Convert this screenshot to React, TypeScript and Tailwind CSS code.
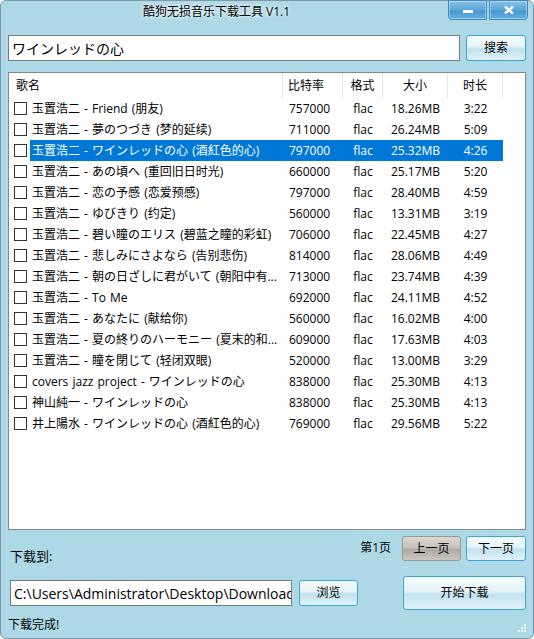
import React from "react";

type Song = {
  name: string;
  bitrate: string;
  size: string;
  duration: string;
};

const songs: Song[] = [
  { name: "玉置浩二 - Friend (朋友)", bitrate: "757000", size: "18.26MB", duration: "3:22" },
  { name: "玉置浩二 - 夢のつづき (梦的延续)", bitrate: "711000", size: "26.24MB", duration: "5:09" },
  { name: "玉置浩二 - ワインレッドの心 (酒紅色的心)", bitrate: "797000", size: "25.32MB", duration: "4:26" },
  { name: "玉置浩二 - あの頃へ (重回旧日时光)", bitrate: "660000", size: "25.17MB", duration: "5:20" },
  { name: "玉置浩二 - 恋の予感 (恋爱预感)", bitrate: "797000", size: "28.40MB", duration: "4:59" },
  { name: "玉置浩二 - ゆびきり (约定)", bitrate: "560000", size: "13.31MB", duration: "3:19" },
  { name: "玉置浩二 - 碧い瞳のエリス (碧蓝之瞳的彩虹)", bitrate: "706000", size: "22.45MB", duration: "4:27" },
  { name: "玉置浩二 - 悲しみにさよなら (告别悲伤)", bitrate: "814000", size: "28.06MB", duration: "4:49" },
  { name: "玉置浩二 - 朝の日ざしに君がいて (朝阳中有...", bitrate: "713000", size: "23.74MB", duration: "4:39" },
  { name: "玉置浩二 - To Me", bitrate: "692000", size: "24.11MB", duration: "4:52" },
  { name: "玉置浩二 - あなたに (献给你)", bitrate: "560000", size: "16.02MB", duration: "4:00" },
  { name: "玉置浩二 - 夏の終りのハーモニー (夏末的和...", bitrate: "609000", size: "17.63MB", duration: "4:03" },
  { name: "玉置浩二 - 瞳を閉じて (轻闭双眼)", bitrate: "520000", size: "13.00MB", duration: "3:29" },
  { name: "covers jazz project - ワインレッドの心", bitrate: "838000", size: "25.30MB", duration: "4:13" },
  { name: "神山純一 - ワインレッドの心", bitrate: "838000", size: "25.30MB", duration: "4:13" },
  { name: "井上陽水 - ワインレッドの心 (酒紅色的心)", bitrate: "769000", size: "29.56MB", duration: "5:22" },
];

const blueBtn =
  "flex items-center justify-center rounded-[3px] border border-[#3aa6d6] bg-[linear-gradient(to_bottom,#f6fbfd_0%,#e6f4f9_42%,#c2e2ee_55%,#e2f2f8_100%)] text-[12px] text-black";

const titleBtn =
  "w-[39px] h-[20px] flex items-center justify-center border border-[#4289bb] bg-[linear-gradient(to_bottom,#86c3e9,#5aa7d8_50%,#4597cf_55%,#66b0de)] shadow-[inset_0_0_0_1px_rgba(255,255,255,0.35)]";

const App: React.FC = () => {
  const selected = 2;

  return (
    <div className="w-[534px] h-[639px] bg-white font-['Open_Sans','Noto_Sans_CJK_SC',sans-serif]">
      <div className="w-full h-full flex flex-col rounded-[6px] border border-[#7d98aa] bg-[#add8e6] px-[7px]">
        {/* title bar */}
        <div className="flex h-[19px] -mx-[7px]">
          <div className="flex-1 pr-[16px] pt-[3px] text-center text-[12px] leading-[16px] text-black [text-shadow:0_0_6px_#ffffff,0_0_3px_#ffffff]">
            酷狗无损音乐下载工具 V1.1
          </div>
          <div className="flex gap-[2px] mr-[5px] -mt-px">
            <div className={titleBtn + " rounded-bl-[4px]"}>
              <div className="w-[10px] h-[3px] bg-white mt-[3px]" />
            </div>
            <div className={titleBtn + " rounded-br-[4px]"}>
              <svg width="10" height="8" viewBox="0 0 10 8">
                <path d="M1 0.5 L9 7.5 M9 0.5 L1 7.5" stroke="white" strokeWidth="2.4" />
              </svg>
            </div>
          </div>
        </div>

        {/* search row */}
        <div className="flex mt-[15px] gap-[6px]">
          <div className="w-[452px] h-[26px] flex items-center border border-[#7a7a7a] bg-white pl-[3px] text-[14px] text-black">
            ワインレッドの心
          </div>
          <button className={blueBtn + " w-[60px] h-[26px]"}>搜索</button>
        </div>

        {/* song table */}
        <div className="mt-[11px] h-[458px] border border-[#828790] bg-white text-[12px] text-black">
          <div className="flex h-[25px]">
            <div className="w-[274px] flex items-center pl-[7px] border-r border-[#e5e5e5]">歌名</div>
            <div className="w-[60px] flex items-center pl-[5px] border-r border-[#e5e5e5]">比特率</div>
            <div className="w-[40px] flex items-center justify-center border-r border-[#e5e5e5]">格式</div>
            <div className="w-[65px] flex items-center justify-center border-r border-[#e5e5e5]">大小</div>
            <div className="w-[55px] flex items-center justify-center border-r border-[#e5e5e5]">时长</div>
          </div>
          {songs.map((song, idx) => (
            <div key={`song-${idx}`} className="flex h-[21px]">
              <div className="w-[21px] flex items-center pl-[5px]">
                <div className="w-[13px] h-[13px] border border-[#333333] bg-white" />
              </div>
              <div
                className={
                  idx === selected
                    ? "w-[473px] flex items-center bg-[#0078d7] text-white"
                    : "w-[473px] flex items-center"
                }
              >
                <div className="w-[253px] pl-[2px] whitespace-nowrap overflow-hidden [word-spacing:1px]">
                  {song.name}
                </div>
                <div className="w-[60px] pl-[6px]">{song.bitrate}</div>
                <div className="w-[40px] text-center">flac</div>
                <div className="w-[65px] text-center">{song.size}</div>
                <div className="w-[55px] text-center">{song.duration}</div>
              </div>
            </div>
          ))}
        </div>

        {/* pager row */}
        <div className="flex mt-[6px] h-[25px]">
          <div className="ml-[2px] mt-[12px] text-[13px] leading-[16px] text-black">下载到:</div>
          <div className="ml-auto flex items-center">
            <span className="text-[12px] text-black mr-[11px] -mt-[2px]">第1页</span>
            <button className="w-[59px] h-[25px] flex items-center justify-center rounded-[3px] border border-[#9c978f] bg-[linear-gradient(to_bottom,#dcd8d0_0%,#c6c2ba_45%,#aeaaa2_55%,#cbc7bf_100%)] text-[12px] text-black">
              上一页
            </button>
            <button className={blueBtn + " w-[60px] h-[25px] ml-[5px]"}>下一页</button>
          </div>
        </div>

        {/* download row */}
        <div className="flex items-center mt-[15px] h-[34px]">
          <div className="ml-[2px] w-[282px] h-[26px] flex items-center border border-[#7a7a7a] bg-white pl-[3px] text-[14px] text-black whitespace-nowrap overflow-hidden">
            C:\Users\Administrator\Desktop\Downloads
          </div>
          <button className={blueBtn + " w-[59px] h-[26px] ml-[7px]"}>浏览</button>
          <button className={blueBtn + " w-[123px] h-[34px] ml-auto"}>开始下载</button>
        </div>

        {/* status row */}
        <div className="flex items-end mt-[7px]">
          <span className="text-[12px] leading-[16px] text-black">下载完成!</span>
          <svg className="ml-auto mb-[1px]" width="9" height="9" viewBox="0 0 9 9">
            <rect x="7" y="1" width="2" height="2" fill="#ffffff" />
            <rect x="4" y="4" width="2" height="2" fill="#ffffff" />
            <rect x="7" y="4" width="2" height="2" fill="#ffffff" />
            <rect x="1" y="7" width="2" height="2" fill="#ffffff" />
            <rect x="4" y="7" width="2" height="2" fill="#ffffff" />
            <rect x="7" y="7" width="2" height="2" fill="#ffffff" />
          </svg>
        </div>
      </div>
    </div>
  );
};

export default App;
